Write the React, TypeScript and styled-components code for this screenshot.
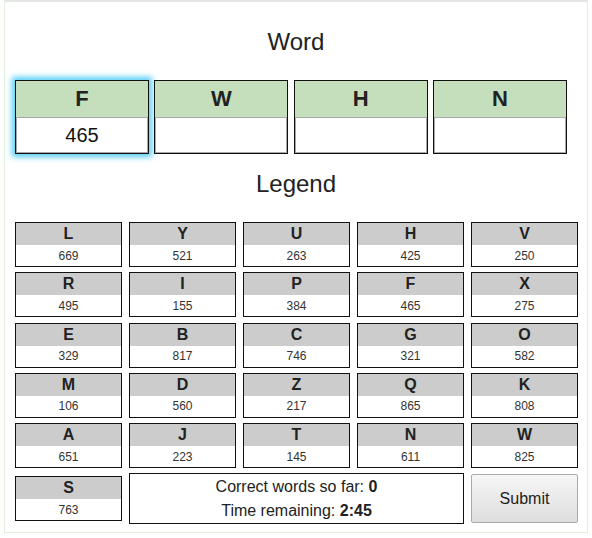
import React from "react";
import styled, { createGlobalStyle } from "styled-components";

const Global = createGlobalStyle`
  html, body { margin: 0; padding: 0; background: #fff; }
  body { font-family: "Liberation Sans", Arial, sans-serif; color: #222; }
`;

const Frame = styled.div`
  box-sizing: border-box;
  margin: 0 4px;
  width: 584px;
  height: 533px;
  border: 1px solid #e2eddc;
  border-top: 2px solid #e4e6e4;
  padding: 0 10px;
`;

const Title = styled.div<{ $top: number }>`
  margin: ${(p) => p.$top}px 0 0;
  text-align: center;
  font-size: 24px;
  line-height: 26px;
  color: #222;
`;

const WordRow = styled.div`
  display: flex;
  gap: 5.33px;
  margin-top: 25px;
`;

const WordCell = styled.div<{ $active?: boolean }>`
  box-sizing: border-box;
  width: 134px;
  height: 74px;
  border: 1px solid #111;
  display: flex;
  flex-direction: column;
  box-shadow: ${(p) => (p.$active ? "0 0 6px 3px #55cdf5" : "none")};
`;

const WordHead = styled.div`
  height: 36px;
  background: #c5dfbd;
  display: flex;
  align-items: center;
  justify-content: center;
  font-weight: bold;
  font-size: 22px;
  color: #222;
`;

const WordValue = styled.div`
  box-sizing: border-box;
  flex: 1;
  border: 1px solid #a8a8a8;
  background: #fff;
  display: flex;
  align-items: center;
  justify-content: center;
  font-size: 20px;
  color: #111;
`;

const Legend = styled.div`
  display: grid;
  grid-template-columns: repeat(5, 107px);
  grid-template-rows: repeat(5, 45px) 51px;
  column-gap: 7px;
  row-gap: 5.3px;
  align-items: center;
  margin-top: 25px;
`;

const Key = styled.div`
  box-sizing: border-box;
  height: 45px;
  border: 1px solid #111;
  display: flex;
  flex-direction: column;
`;

const KeyHead = styled.div`
  height: 22px;
  background: #cccccc;
  display: flex;
  align-items: center;
  justify-content: center;
  font-weight: bold;
  font-size: 16px;
  color: #222;
`;

const KeyValue = styled.div`
  flex: 1;
  display: flex;
  align-items: center;
  justify-content: center;
  font-size: 12px;
  color: #333;
`;

const Info = styled.div`
  grid-column: span 3;
  box-sizing: border-box;
  height: 51px;
  border: 1px solid #111;
  display: flex;
  flex-direction: column;
  justify-content: center;
  align-items: center;
  gap: 5px;
  font-size: 16px;
  line-height: 19px;
  color: #222;
`;

const SubmitButton = styled.button`
  box-sizing: border-box;
  height: 49px;
  width: 107px;
  border: 1px solid #aaa;
  border-radius: 2px;
  background: linear-gradient(#f6f6f6, #dedede);
  font-family: "Liberation Sans", Arial, sans-serif;
  font-size: 16px;
  color: #222;
  padding: 0;
`;

const word = [
  { l: "F", v: "465" },
  { l: "W", v: "" },
  { l: "H", v: "" },
  { l: "N", v: "" },
];

const keys: [string, number][] = [
  ["L", 669], ["Y", 521], ["U", 263], ["H", 425], ["V", 250],
  ["R", 495], ["I", 155], ["P", 384], ["F", 465], ["X", 275],
  ["E", 329], ["B", 817], ["C", 746], ["G", 321], ["O", 582],
  ["M", 106], ["D", 560], ["Z", 217], ["Q", 865], ["K", 808],
  ["A", 651], ["J", 223], ["T", 145], ["N", 611], ["W", 825],
  ["S", 763],
];

export default function App() {
  return (
    <>
      <Global />
      <Frame>
        <Title $top={27}>Word</Title>
        <WordRow>
          {word.map((w, i) => (
            <WordCell key={w.l} $active={i === 0}>
              <WordHead>{w.l}</WordHead>
              <WordValue>{w.v}</WordValue>
            </WordCell>
          ))}
        </WordRow>
        <Title $top={17}>Legend</Title>
        <Legend>
          {keys.map(([l, v]) => (
            <Key key={l}>
              <KeyHead>{l}</KeyHead>
              <KeyValue>{v}</KeyValue>
            </Key>
          ))}
          <Info>
            <div>
              Correct words so far: <b>0</b>
            </div>
            <div>
              Time remaining: <b>2:45</b>
            </div>
          </Info>
          <SubmitButton>Submit</SubmitButton>
        </Legend>
      </Frame>
    </>
  );
}
